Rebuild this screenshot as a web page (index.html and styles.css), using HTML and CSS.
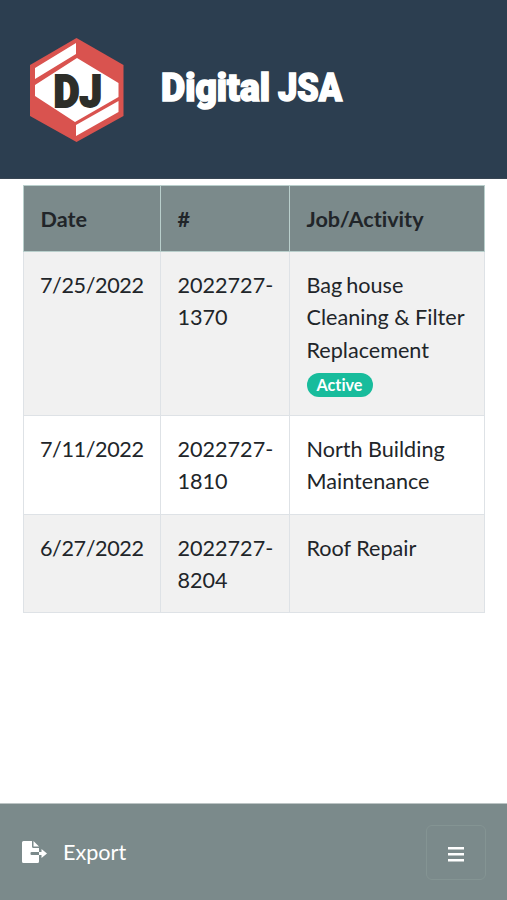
FILE: index.html
```html
<!DOCTYPE html>
<html lang="en">
<head>
<meta charset="utf-8">
<title>Digital JSA</title>
<link rel="stylesheet" href="styles.css">
</head>
<body>
<header class="header">
  <svg class="logo" width="94" height="104" viewBox="0 0 94 104">
    <path fill="#d9534f" d="M46.500 0 93.500 27V78L46.500 104 0 78V27Z"/>
    <path fill="#fff" d="M46 5V16L5 41V30ZM47 20 88.500 45V59L45 84 5 58V47ZM88.500 63V74L46 98V87Z"/>
    <text class="logo-text" x="23.500" y="68.500" textLength="48.500" lengthAdjust="spacingAndGlyphs">DJ</text>
  </svg>
  <svg class="brand" width="190" height="50" viewBox="0 0 190 50" role="heading" aria-level="1">
    <text class="brand-text" x="1" y="36" textLength="109" lengthAdjust="spacingAndGlyphs">Digital</text>
    <text class="brand-text" x="118" y="36" textLength="64" lengthAdjust="spacingAndGlyphs">JSA</text>
  </svg>
</header>
<main class="content">
  <table class="jobs">
    <colgroup><col class="col-date"><col class="col-number"><col class="col-job"></colgroup>
    <thead>
      <tr><th>Date</th><th>#</th><th>Job/Activity</th></tr>
    </thead>
    <tbody>
      <tr class="shaded first"><td class="date">7/25/2022</td><td>2022727-<br>1370</td><td><span class="tight">Bag house</span><br>Cleaning &amp; Filter<br>Replacement<br><span class="badge">Active</span></td></tr>
      <tr><td class="date">7/11/2022</td><td>2022727-<br>1810</td><td>North Building<br>Maintenance</td></tr>
      <tr class="shaded"><td class="date">6/27/2022</td><td>2022727-<br>8204</td><td>Roof Repair</td></tr>
    </tbody>
  </table>
</main>
<footer class="footer">
  <a class="export">
    <svg width="26" height="22" viewBox="0 0 26 22">
      <path fill="#fff" d="M1.500 0H10V5.500Q10 7 11.500 7H17V11H9.500Q8.500 11 8.500 12V13Q8.500 14 9.500 14H17V20.500Q17 22 15.500 22H1.500Q0 22 0 20.500V1.500Q0 0 1.500 0ZM11.500 0 17 5.500H11.500ZM17 11H19.500V8L25 12.500 19.500 17V14H17Z"/>
    </svg>
    <span>Export</span>
  </a>
  <button class="menu" aria-label="Menu">
    <svg width="16" height="15" viewBox="0 0 16 15"><path fill="#fff" d="M0 0H16V2.600H0ZM0 6H16V8.600H0ZM0 12H16V14.600H0Z"/></svg>
  </button>
</footer>
</body>
</html>
```
FILE: styles.css
```css
* { box-sizing: border-box; }
body {
  margin: 0;
  height: 900px;
  display: flex;
  flex-direction: column;
  background: #fff;
  color: #212529;
  font: 21.6px/32.4px Lato, sans-serif;
  font-variant-ligatures: none;
}
.header {
  height: 179px;
  flex: none;
  display: flex;
  align-items: center;
  padding: 2px 0 0 30px;
  background: #2c3e50;
  border-bottom: 1px solid #384553;
}
.logo { margin-right: 36px; }
.logo-text {
  font: 900 45px Roboto, sans-serif;
  fill: #2d2e29;
  stroke: #2d2e29;
  stroke-width: 1.8px;
}
.brand { margin-top: -1px; }
.brand-text {
  font: 900 38px Roboto, sans-serif;
  fill: #fff;
  stroke: #fff;
  stroke-width: 1.6px;
}
.content { flex: 1; padding: 6px 22px 0 23px; }
.jobs {
  width: 461px;
  table-layout: fixed;
  border-collapse: collapse;
}
.col-date { width: 137px; }
.col-number { width: 129px; }
.col-job { width: 195px; }
th, td {
  padding: 17px 0 0 16.5px;
  border: 1px solid #dee2e6;
  text-align: left;
  vertical-align: top;
  white-space: nowrap;
}
th {
  height: 66px;
  background: #7b8a8b;
  border-color: #b9cfcc;
  font-weight: 700;
}
td { height: 98.5px; }
.date { padding-left: 16px; letter-spacing: -0.4px; }
.tight { word-spacing: -1.5px; }
.shaded td { background: #f1f1f1; }
.first td { height: 164px; }
.badge {
  display: block;
  width: 66px;
  height: 24px;
  margin-top: 7px;
  border-radius: 12px;
  background: #18bc9c;
  color: #fff;
  font-size: 16.2px;
  font-weight: 700;
  line-height: 23px;
  text-align: center;
}
.footer {
  height: 97px;
  flex: none;
  display: flex;
  align-items: center;
  justify-content: space-between;
  padding: 0 21px 0 22px;
  background: #7b8a8b;
  border-top: 1px solid #bcc4c4;
}
.export {
  display: flex;
  align-items: center;
  gap: 15px;
  color: #fff;
}
.menu {
  width: 60px;
  height: 55px;
  padding: 4px 0 0;
  display: flex;
  align-items: center;
  justify-content: center;
  background: transparent;
  border: 1px solid #849493;
  border-radius: 6px;
}
```
